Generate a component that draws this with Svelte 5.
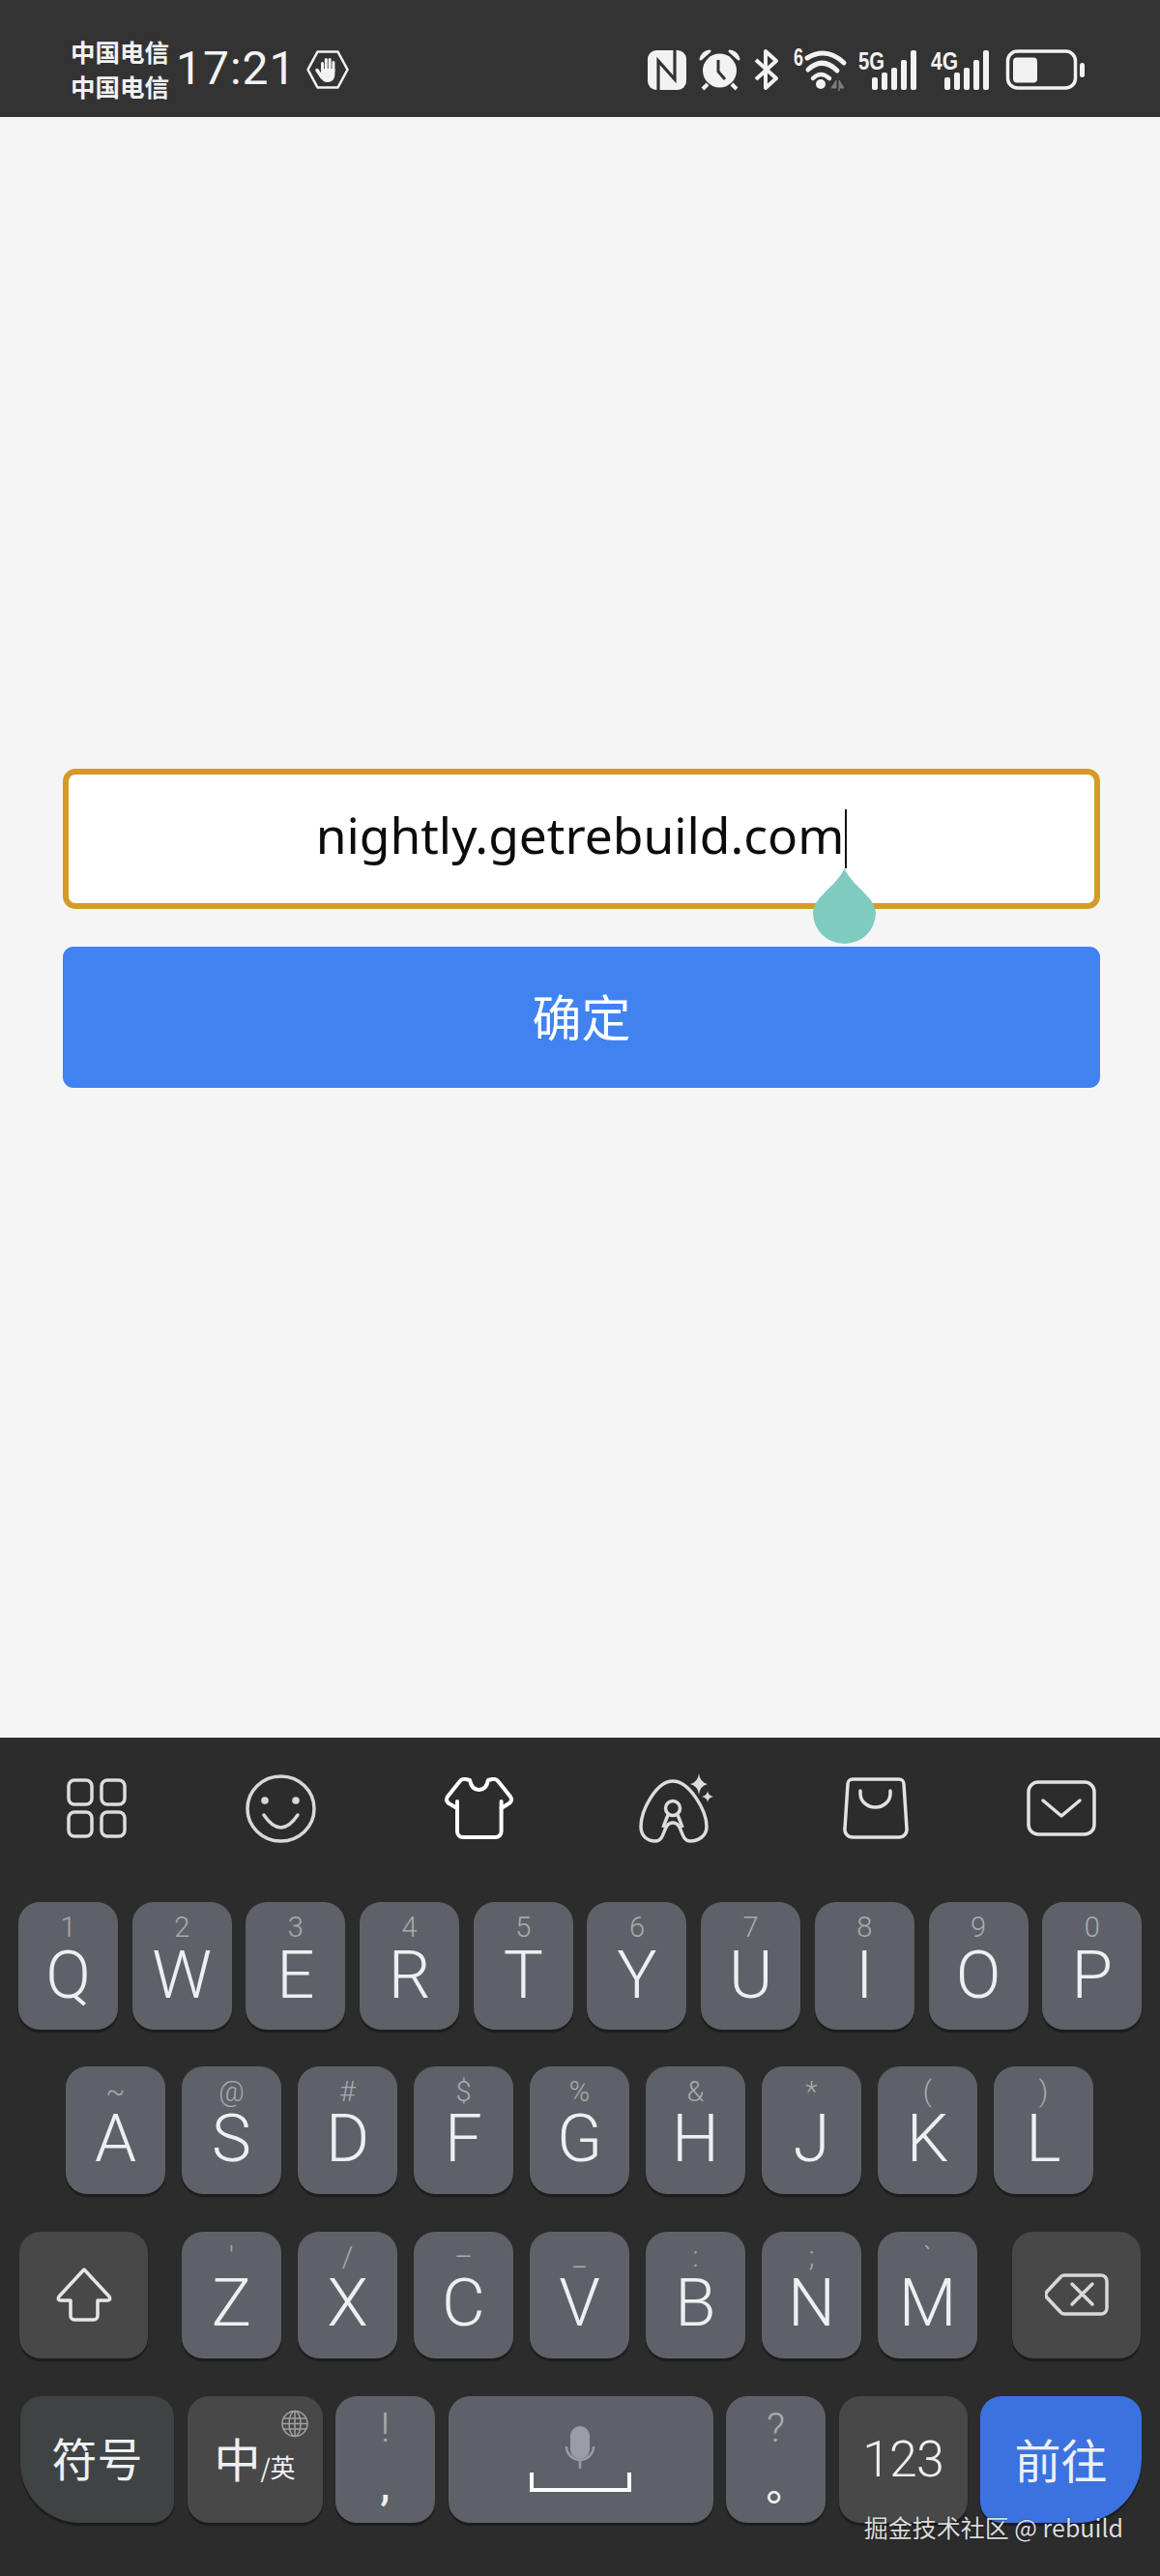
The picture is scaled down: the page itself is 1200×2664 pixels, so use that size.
<script>
	const row1 = [['1','Q'],['2','W'],['3','E'],['4','R'],['5','T'],['6','Y'],['7','U'],['8','I'],['9','O'],['0','P']];
	const row2 = [['~','A'],['@','S'],['#','D'],['$','F'],['%','G'],['&','H'],['*','J'],['(','K'],[')','L']];
	const row3 = [["'",'Z'],['/','X'],['–','C'],['_','V'],[':','B'],[';','N'],['`','M']];
</script>

{#snippet signal(label, labelW)}
	<svg class="sig" viewBox="0 0 62 42" width="62" height="42">
		<text x="0" y="21" textLength={labelW} lengthAdjust="spacingAndGlyphs" class="tiny">{label}</text>
		<rect x="14" y="29" width="6" height="13" rx="2"/>
		<rect x="24" y="24" width="6" height="18" rx="2"/>
		<rect x="34" y="19" width="6" height="23" rx="2"/>
		<rect x="44" y="11" width="6" height="31" rx="2"/>
		<rect x="54" y="1" width="6" height="41" rx="2"/>
	</svg>
{/snippet}

{#snippet letter(k)}
	<div class="key">
		<span class="hint">{k[0]}</span>
		<span class="cap">{k[1]}</span>
	</div>
{/snippet}

<div class="page">
	<header class="status">
		<div class="carriers"><span>中国电信</span><span>中国电信</span></div>
		<span class="time">17:21</span>
		<svg class="block" viewBox="0 0 44 40" width="44" height="40">
			<path d="M11.500 1.500H32.500L42.500 20L32.500 38.500H11.500L1.500 20Z" fill="none" stroke="#f2f2f2" stroke-width="2.600" stroke-linejoin="round"/>
			<g fill="#f2f2f2">
				<rect x="15" y="12" width="3" height="12" rx="1.500"/>
				<rect x="18.800" y="8" width="3" height="14" rx="1.500"/>
				<rect x="22.600" y="8" width="3" height="14" rx="1.500"/>
				<rect x="26.400" y="11" width="3" height="12" rx="1.500"/>
				<path d="M15 19H29.400V25C29.400 30 26 33 22 33C18 33 16 31 15 28Z"/>
			</g>
			<path d="M11 20.500L16 28" stroke="#f2f2f2" stroke-width="3.500" stroke-linecap="round"/>
		</svg>
		<div class="tray">
			<svg viewBox="0 0 40 42" width="40" height="42">
				<rect y="1" width="40" height="41" rx="9" fill="#f2f2f2"/>
				<path d="M11 42V12L28 31V1" fill="none" stroke="#333" stroke-width="3.200"/>
			</svg>
			<svg viewBox="0 0 43 42" width="43" height="42">
				<circle cx="21.500" cy="22" r="17.500" fill="#f2f2f2"/>
				<path d="M2 10Q4 3 11 2ZM41 10Q39 3 32 2Z" fill="#f2f2f2" stroke="#f2f2f2" stroke-width="3" stroke-linejoin="round"/>
				<path d="M9 36L4 41M34 36L39 41" stroke="#f2f2f2" stroke-width="4"/>
				<path d="M20 11V23L27 31" fill="none" stroke="#333" stroke-width="3"/>
			</svg>
			<svg viewBox="0 0 29 42" width="29" height="42">
				<path d="M3 11L24 30L13 40V2L24 12L3 31" fill="none" stroke="#f2f2f2" stroke-width="4" stroke-linejoin="round"/>
			</svg>
			<svg class="wifi" viewBox="0 0 54 44" width="54" height="44">
				<text x="0" y="18" class="tiny" textLength="10" lengthAdjust="spacingAndGlyphs">6</text>
				<path d="M14 10Q34-2 52 15" fill="none" stroke="#f2f2f2" stroke-width="5" stroke-linecap="round"/>
				<path d="M15 22Q30 8 45 23" fill="none" stroke="#f2f2f2" stroke-width="5" stroke-linecap="round"/>
				<path d="M20 31Q28 23 37 31" fill="none" stroke="#f2f2f2" stroke-width="4.500" stroke-linecap="round"/>
				<circle cx="28" cy="37" r="5" fill="#f2f2f2"/>
				<path d="M44 33L39 41H44ZM47 44V33L52 41H47Z" fill="#7d7d7d" stroke="#7d7d7d"/>
			</svg>
			{@render signal('5G', 27)}
			{@render signal('4G', 28)}
			<svg viewBox="0 0 84 42" width="84" height="42">
				<rect x="4.500" y="2" width="70" height="38" rx="10" fill="none" stroke="#f2f2f2" stroke-width="3.500"/>
				<rect x="10" y="8.500" width="25" height="26" rx="4" fill="#f2f2f2"/>
				<rect x="79" y="14" width="5" height="15" rx="2.500" fill="#f2f2f2"/>
			</svg>
		</div>
	</header>

	<main class="content">
		<div class="field">
			<span class="url">nightly.getrebuild.com</span><span class="caret"></span>
			<svg class="drop" viewBox="0 0 65 78" width="65" height="78">
				<path d="M32.500 0C40 18 65 30 65 46A32.500 32 0 0 1 0 46C0 30 25 18 32.500 0Z" fill="#80cbc0"/>
			</svg>
		</div>
		<button class="ok">确定</button>
	</main>

	<section class="keyboard">
		<div class="tools">
			<svg viewBox="0 0 62 62" width="62" height="62">
				<g fill="none" stroke="#dcdcdc" stroke-width="3.500">
					<rect x="2" y="2" width="24" height="25" rx="6"/>
					<rect x="36" y="2" width="24" height="25" rx="6"/>
					<rect x="2" y="35" width="24" height="25" rx="6"/>
					<rect x="36" y="35" width="24" height="25" rx="6"/>
				</g>
			</svg>
			<svg class="smile" viewBox="0 0 73 71" width="73" height="71">
				<ellipse cx="36.500" cy="35.500" rx="34.500" ry="33.500" fill="none" stroke="#d8d8d8" stroke-width="3.500"/>
				<circle cx="20" cy="27" r="3.800" fill="#d8d8d8"/>
				<circle cx="52" cy="27" r="3.800" fill="#d8d8d8"/>
				<path d="M19 42Q36.500 68 54 42" fill="none" stroke="#d8d8d8" stroke-width="3.500" stroke-linecap="round"/>
			</svg>
			<svg class="shirt" viewBox="0 0 71 64" width="71" height="64">
				<g fill="none" stroke="#fff" stroke-width="4" stroke-linecap="round" stroke-linejoin="round">
					<path d="M13 25V56a6 6 0 0 0 6 6H52.600a6 6 0 0 0 6-6V25"/>
					<path d="M13 32L6 28Q0 25 3 20L15 5Q18 1 22 2L26 3Q28 13 35.500 13Q43 13 45 3L49 2Q53 1 56 5L68 20Q71 25 65 28L58.600 32"/>
				</g>
			</svg>
			<svg class="ai" viewBox="0 0 77 72" width="77" height="72">
				<g fill="none" stroke="#dcdcdc" stroke-width="3.500">
					<path d="M35 8C18 8 2 38 2 55C2 65 9 70 17 70C28 70 24 51 35 51C46 51 42 70 53 70C61 70 70 65 70 55C70 38 52 8 35 8Z"/>
					<circle cx="35" cy="36" r="7.500"/>
					<path d="M30 43Q27 50 25 56M40 43Q43 50 45 56"/>
				</g>
				<path d="M62 0Q63 9 71 11Q63 13 62 22Q61 13 53 11Q61 9 62 0Z" fill="#dcdcdc"/>
				<path d="M71 18Q71.500 23 77 24Q71.500 25 71 30Q70.500 25 65 24Q70.500 23 71 18Z" fill="#dcdcdc"/>
			</svg>
			<svg class="bag" viewBox="0 0 68 64" width="68" height="64">
				<g fill="none" stroke="#e2e2e2" stroke-width="3.500" stroke-linecap="round">
					<path d="M10 2H58a5 5 0 0 1 5 5L66 53a8 8 0 0 1-8 9H10a8 8 0 0 1-8-9L5 7a5 5 0 0 1 5-5Z"/>
					<path d="M18 14v3a15.500 14 0 0 0 31 0v-3"/>
				</g>
			</svg>
			<svg class="chev" viewBox="0 0 72 58" width="72" height="58">
				<g fill="none" stroke="#e2e2e2" stroke-width="3.500" stroke-linecap="round" stroke-linejoin="round">
					<rect x="2" y="2" width="68" height="54" rx="10"/>
					<path d="M17 21L36 37L55 21"/>
				</g>
			</svg>
		</div>

		<div class="rows">
			<div class="row r1">
				{#each row1 as k}{@render letter(k)}{/each}
			</div>
			<div class="row r2">
				{#each row2 as k}{@render letter(k)}{/each}
			</div>
			<div class="row r3">
				<div class="key fn shift">
					<svg viewBox="0 0 58 56" width="58" height="56">
						<path d="M29 2L55 30Q57 34 53 34H43V50a4 4 0 0 1-4 4H19a4 4 0 0 1-4-4V34H5Q1 34 3 30Z" fill="none" stroke="#e6e6e6" stroke-width="3.500" stroke-linejoin="round"/>
					</svg>
				</div>
				{#each row3 as k}{@render letter(k)}{/each}
				<div class="key fn del">
					<svg viewBox="0 0 66 44" width="66" height="44">
						<g fill="none" stroke="#d8d8d8" stroke-width="3.500" stroke-linecap="round">
							<path d="M20 2H58a6 6 0 0 1 6 6V36a6 6 0 0 1-6 6H20a5 5 0 0 1-4-2L2 25a5 5 0 0 1 0-6L16 4a5 5 0 0 1 4-2Z"/>
							<path d="M28 11L49 32M49 11L28 32"/>
						</g>
					</svg>
				</div>
			</div>
			<div class="row r4">
				<div class="key fn sym">符号</div>
				<div class="key fn lang">
					<span class="zh">中</span><span class="slash">/英</span>
					<svg class="globe" viewBox="0 0 28 29" width="28" height="29">
						<g fill="none" stroke="#a0a0a0" stroke-width="1.500">
							<circle cx="14" cy="14.500" r="13"/>
							<ellipse cx="14" cy="14.500" rx="6" ry="13"/>
							<path d="M14 1.500V27.500M2 9H26M1 14.500H27M2 20H26"/>
						</g>
					</svg>
				</div>
				<div class="key punct">
					<span class="bang">!</span>
					<span class="mark">,</span>
				</div>
				<div class="key space">
					<svg viewBox="0 0 105 70" width="105" height="70">
						<rect x="42" y="0" width="20" height="34" rx="10" fill="#9a9da4"/>
						<path d="M38 21A14 14 0 0 0 66 21M52 36V44" fill="none" stroke="#9a9da4" stroke-width="2.500"/>
						<path d="M2 48V66H103V48" fill="none" stroke="#fff" stroke-width="4"/>
					</svg>
				</div>
				<div class="key punct">
					<span class="bang">?</span>
					<span class="mark stop">。</span>
				</div>
				<div class="key fn num">123</div>
				<div class="key go">前往</div>
			</div>
		</div>
		<span class="watermark">掘金技术社区 @ rebuild</span>
	</section>
</div>

<style>
	:global(body) { margin: 0; background: #f5f5f5; }

	.page {
		width: 1200px; height: 2664px;
		display: flex; flex-direction: column;
		font-family: "Noto Sans CJK SC", "Noto Sans", sans-serif;
		overflow: hidden;
	}

	/* status bar */
	.status {
		height: 121px; flex: none; box-sizing: border-box;
		background: #333;
		color: #f2f2f2;
		display: flex; align-items: center;
		padding: 20px 78px 0 73px;
	}
	.status svg { display: block; flex: none; overflow: visible; }
	.carriers {
		display: flex; flex-direction: column;
		font-size: 25.500px; font-weight: 700; line-height: 36px;
		margin-top: 1px;
	}
	.time {
		font-family: Roboto, sans-serif;
		font-size: 48px; letter-spacing: 1px; line-height: 1;
		margin-left: 7px; margin-top: 1px;
	}
	.block { margin-left: 10px; margin-top: 3px; }
	.tray { margin-left: auto; display: flex; align-items: center; gap: 13px; margin-top: 3px; }
	.tiny { font-family: "Liberation Sans", sans-serif; font-weight: 700; font-size: 25px; fill: #f2f2f2; }
	.sig rect { fill: #f2f2f2; }

	/* page body */
	.content {
		flex: 1; background: #f5f5f5;
		padding: 674px 62px 0 65px;
		display: flex; flex-direction: column; gap: 39px;
	}
	.field {
		position: relative;
		height: 145px; box-sizing: border-box;
		background: #fff;
		border: 6px solid #d69b27; border-radius: 13px;
		display: flex; align-items: center; justify-content: center;
	}
	.url {
		font-family: "Noto Sans", sans-serif;
		font-size: 51.500px; color: #0c0c0c; line-height: 1;
		margin-top: -8px;
	}
	.caret { width: 2px; height: 61px; background: #111; margin-left: 1px; }
	.drop { position: absolute; left: 770px; top: 97px; }
	.ok {
		height: 146px; border: none; border-radius: 11px;
		background: #4083f0; color: #fff;
		font-family: inherit; font-size: 51px; padding: 0 0 4px;
	}

	/* keyboard */
	.keyboard {
		position: relative;
		height: 867px; flex: none; box-sizing: border-box;
		background: #2c2c2c;
	}
	.tools {
		height: 146px; box-sizing: border-box;
		padding: 0 0 0 69px;
		display: flex; align-items: center; gap: 128px;
	}
	.tools svg { display: block; flex: none; }
	.smile { margin-left: -5px; }
	.shirt { margin-left: 5px; }
	.ai { margin-left: 2px; }
	.bag { margin-left: 6px; }
	.chev { margin-left: -6px; }

	.rows { margin-top: 24px; display: flex; flex-direction: column; gap: 38.800px; }
	.row { display: grid; height: 131.500px; }
	.r1 { grid-template-columns: repeat(10, 103px); column-gap: 14.700px; margin-left: 19px; }
	.r2 { grid-template-columns: repeat(9, 103px); column-gap: 17px; margin-left: 68px; }
	.r3 { grid-template-columns: 151px repeat(7, 103px) 152px; column-gap: 17px; margin-left: 20px; }
	.r3 .shift { margin-right: 18px; }
	.r3 .del { margin-left: 19px; }
	.r4 { grid-template-columns: 159px 140px 103px 274px 103px 133px 167px; column-gap: 13.500px; margin-left: 21px; }

	.key {
		position: relative;
		background: #5e6268; border-radius: 22px;
		box-shadow: 0 3px 1px #1d1d1d;
		color: #edf0f3;
		display: flex; flex-direction: column; align-items: center;
		font-family: Roboto, sans-serif;
	}
	.hint {
		height: 33px; margin-top: 10px;
		font-size: 29px; font-weight: 300; line-height: 33px; color: #a8abaf;
	}
	.cap { font-size: 69px; font-weight: 300; line-height: 50px; margin-top: 6.500px; }
	.r1 .cap { margin-top: 8px; }

	.fn { background: #484848; justify-content: center; }
	.sym {
		background: #404343; border-bottom-left-radius: 62px;
		font-family: "Noto Sans CJK SC", sans-serif;
		font-size: 47px; padding-bottom: 6px; box-sizing: border-box;
	}
	.lang {
		flex-direction: row; align-items: baseline; justify-content: center;
		padding-top: 33px; box-sizing: border-box;
		font-family: "Noto Sans CJK SC", sans-serif;
	}
	.zh { font-size: 48px; line-height: 60px; }
	.slash { font-size: 26px; }
	.globe { position: absolute; top: 14px; right: 15px; }
	.punct { justify-content: flex-start; }
	.bang { font-size: 42px; font-weight: 300; line-height: 42px; color: #a8abaf; margin-top: 12px; }
	.mark { font-size: 44px; line-height: 44px; margin-top: 16px; font-weight: 500; }
	.stop { font-family: "Noto Sans CJK SC", sans-serif; font-size: 42px; margin-left: 22px; margin-top: 14px; }
	.space { justify-content: flex-end; padding-bottom: 30px; box-sizing: border-box; }
	.num { font-size: 52px; font-weight: 300; letter-spacing: -1px; box-sizing: border-box; }
	.go {
		background: #3b72e0; justify-content: center;
		border-bottom-right-radius: 66px;
		font-family: "Noto Sans CJK SC", sans-serif;
		font-size: 48px; padding-bottom: 4px; box-sizing: border-box;
	}
	.watermark {
		position: absolute; right: 38px; top: 800px;
		font-family: "Noto Sans CJK SC", sans-serif;
		font-size: 25px; line-height: 32px; color: #dcdcdc;
		text-shadow: 0 0 2px rgba(0,0,0,0.5);
	}
</style>
